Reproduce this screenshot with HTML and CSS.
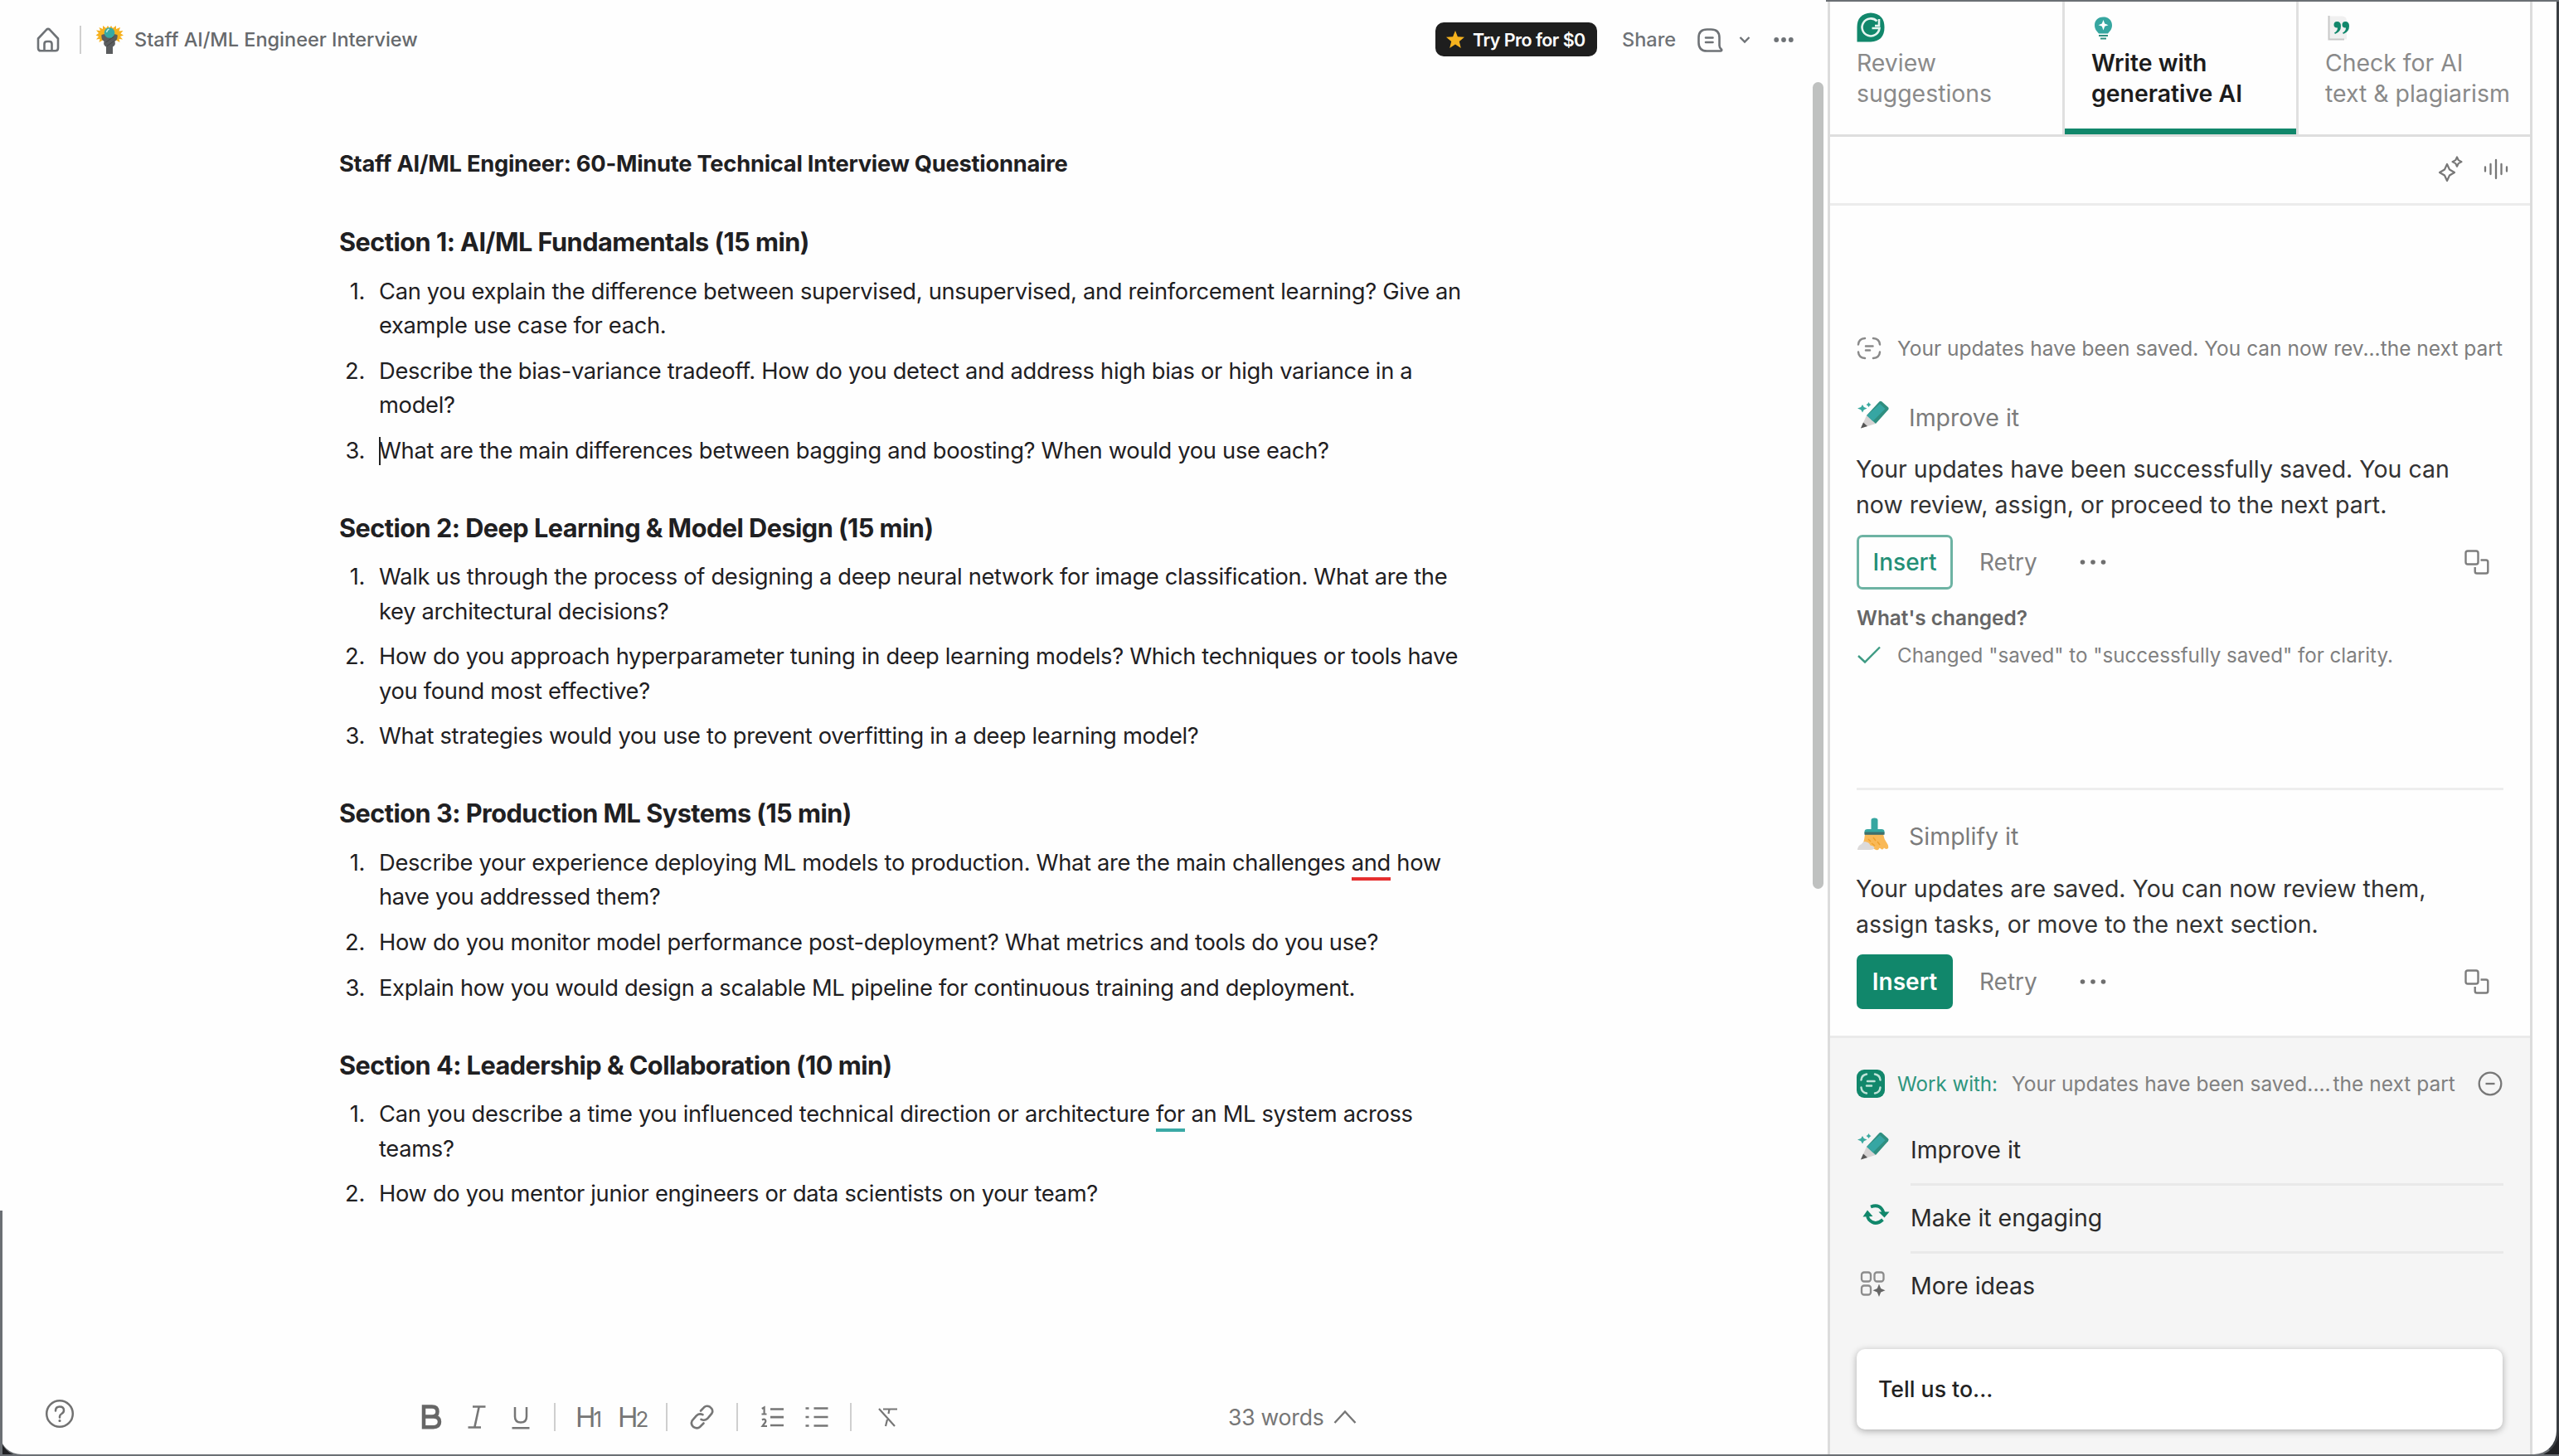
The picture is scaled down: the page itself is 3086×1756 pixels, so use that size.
FILE: index.html
```html
<!DOCTYPE html>
<html lang="en">
<head>
<meta charset="utf-8">
<title>Staff AI/ML Engineer Interview</title>
<link rel="stylesheet" href="styles.css">
</head>
<body>
<svg class="sprite" width="0" height="0" aria-hidden="true">
  <symbol id="pencil" viewBox="0 0 40 36">
    <path d="M7 5l1.800 2.900L12.500 9.500l-3.700 1.800L7 14.500l-1.800-3.200L1 9.500l4.200-1.600z" fill="#3aa99f"/>
    <path d="M14.500 2l1.200 1.900L17.500 5l-1.800 1.200L14.500 8l-1.200-1.800L11.500 5l1.800-1.100z" fill="#3aa99f"/>
    <path d="M12 18L23 28 5 33.500z" fill="#d6d3d3"/>
    <path d="M8 26.500l5 4.500-8 2.500z" fill="#555"/>
    <path d="M27.500 1.300q1.500-1 3 .2l7.300 6.500q1.600 1.500.2 3.200L23 28 12 18z" fill="#2f8f80"/>
    <path d="M28 4l6.500 6L19.500 25 12.500 18z" fill="#36a6a3"/>
  </symbol>
  <symbol id="copy" viewBox="0 0 30 30">
    <g fill="none" stroke="#7d7d7d" stroke-width="2.400" stroke-linejoin="round">
      <rect x="1.500" y="1.500" width="15" height="16" rx="2.500"/>
      <path d="M19.500 12.500H26q2.300 0 2.300 2.300v11.400q0 2.300-2.300 2.300H15q-2.300 0-2.300-2.300V21"/>
    </g>
  </symbol>
  <symbol id="dots" viewBox="0 0 32 8">
    <g fill="#6f6f6f"><circle cx="3.500" cy="4" r="2.800"/><circle cx="16" cy="4" r="2.800"/><circle cx="28.500" cy="4" r="2.800"/></g>
  </symbol>
</svg>

<div class="window">
  <main class="editor">
    <header class="topbar">
      <svg class="home" width="28" height="30" viewBox="0 0 28 30" fill="none" stroke="#6e7276" stroke-width="2.600" stroke-linejoin="round"><path d="M2 13.500L12 2.800q2-1.800 4 0l10 10.700V25q0 3.300-3.300 3.300H5.300Q2 28.300 2 25z"/><path d="M9.500 28v-8q0-3 3-3h3q3 0 3 3v8"/></svg>
      <span class="rule"></span>
      <svg class="doc-icon" width="34" height="34" viewBox="0 0 34 34"><path d="M17 3l2-3 2 3 4-3v4l5-2-1.500 4.500 5-.500-3 3.500 3.500 2-4 1.500 3 3.500-4.500-.500 1 4-4.500-2.500H9L4.500 20l1-4-4.500.5L4 13 .5 11.500 4 9 1 5.500l5 .5L4.500 2 9 4V0l4 3 2-3z" fill="#f6b11f"/><path d="M7.500 11q-1 5 3 8-1.500 4 2.500 6.500V34h8v-8.500q4-2 2.500-6.500 4-3 3-8l-4-1-5.500 3.500L11 10z" fill="#5a5c5e"/><path d="M12.500 20l10-7M14 24.500l8.500-6" stroke="#444" fill="none"/><circle cx="17" cy="8.500" r="6.300" fill="#36a9a5"/><path d="M13.500 8q.5-3 3-4" fill="none" stroke="#c9efec" stroke-width="1.500"/></svg>
      <span class="doc-name">Staff AI/ML Engineer Interview</span>
      <span class="pro"><svg width="22" height="21" viewBox="0 0 22 21"><path d="M11 0l2.900 7.200 8.100.6-6.200 5.100 2 8.100-6.800-4.400L4.200 21l2-8.100L0 7.800l8.100-.6z" fill="#f5b21e"/></svg><span>Try Pro for $0</span></span>
      <span class="share">Share</span>
      <svg class="comment" width="31" height="29" viewBox="0 0 31 29" fill="none" stroke="#6e7276" stroke-width="2.600" stroke-linejoin="round" stroke-linecap="round"><path d="M11.500 1.500h5q10 0 10 10V21q0 2.500 2.600 4.800.6 1.700-1.300 1.700H11.500q-10 0-10-10v-6q0-10 10-10z"/><path d="M10 11.500h8.500M10 17h8.500"/></svg>
      <svg class="chev" width="14" height="10" viewBox="0 0 14 10" fill="none" stroke="#6e7276" stroke-width="2.400"><path d="M1.500 2L7 7.500 12.500 2"/></svg>
      <svg class="more" width="24" height="8" viewBox="0 0 24 8" fill="#6e7276"><circle cx="3.200" cy="4" r="2.900"/><circle cx="12" cy="4" r="2.900"/><circle cx="20.800" cy="4" r="2.900"/></svg>
    </header>

    <article class="doc">
      <h1>Staff AI/ML Engineer: 60-Minute Technical Interview Questionnaire</h1>
      <h2>Section 1: AI/ML Fundamentals (15 min)</h2>
      <ol>
        <li><b>1.</b><p>Can you explain the difference between supervised, unsupervised, and reinforcement learning? Give an<br>example use case for each.</p></li>
        <li><b>2.</b><p>Describe the bias-variance tradeoff. How do you detect and address high bias or high variance in a<br>model?</p></li>
        <li><b>3.</b><p><i class="caret"></i>What are the main differences between bagging and boosting? When would you use each?</p></li>
      </ol>
      <h2>Section 2: Deep Learning &amp; Model Design (15 min)</h2>
      <ol>
        <li><b>1.</b><p>Walk us through the process of designing a deep neural network for image classification. What are the<br>key architectural decisions?</p></li>
        <li><b>2.</b><p>How do you approach hyperparameter tuning in deep learning models? Which techniques or tools have<br>you found most effective?</p></li>
        <li><b>3.</b><p>What strategies would you use to prevent overfitting in a deep learning model?</p></li>
      </ol>
      <h2>Section 3: Production ML Systems (15 min)</h2>
      <ol>
        <li><b>1.</b><p>Describe your experience deploying ML models to production. What are the main challenges <span class="mark red">and</span> how<br>have you addressed them?</p></li>
        <li><b>2.</b><p>How do you monitor model performance post-deployment? What metrics and tools do you use?</p></li>
        <li><b>3.</b><p>Explain how you would design a scalable ML pipeline for continuous training and deployment.</p></li>
      </ol>
      <h2>Section 4: Leadership &amp; Collaboration (10 min)</h2>
      <ol>
        <li><b>1.</b><p>Can you describe a time you influenced technical direction or architecture <span class="mark teal">for</span> an ML system across<br>teams?</p></li>
        <li><b>2.</b><p>How do you mentor junior engineers or data scientists on your team?</p></li>
      </ol>
    </article>

    <footer class="format">
      <svg class="help" width="36" height="36" viewBox="0 0 36 36" fill="none" stroke="#727272" stroke-width="2.500"><circle cx="18" cy="18" r="15.800"/><path d="M13 14.500q0-5 5-5t5 4.500q0 2.500-2.600 4-2.400 1.300-2.400 3.500v1" stroke-linecap="round"/><circle cx="18" cy="26.500" r="1" fill="#727272" stroke-width="1.200"/></svg>
      <svg width="25" height="30" viewBox="0 0 25 30" fill="none" stroke="#666" stroke-width="4.500"><path d="M3 2.500h10q6.500 0 6.500 6t-6.500 6H3zM3 14.500h11.500q7.500 0 7.500 6.300t-7.500 6.500H3z"/></svg>
      <svg class="i" width="22" height="30" viewBox="0 0 22 30" fill="none" stroke="#767676" stroke-width="2.600"><path d="M6 2.500h15.500M.5 27.500H16M13.700 2.500L8.300 27.500"/></svg>
      <svg class="u" width="22" height="28" viewBox="0 0 22 28" fill="none" stroke="#767676" stroke-width="2.500"><path d="M4 1v11.500q0 7 7 7t7-7V1M.5 26.300h21"/></svg>
      <span class="rule r1"></span>
      <span class="hx">H<small>1</small></span>
      <span class="hx h-two">H<small>2</small></span>
      <span class="rule r2"></span>
      <svg class="link" width="30" height="30" viewBox="0 0 30 30" fill="none" stroke="#767676" stroke-width="2.600" stroke-linecap="round"><path d="M13 7.500l4-4.200q3-2.800 7-.6 5 3.600 2.400 8L21 17q-3.500 3-7.500.8"/><path d="M16.500 22.500L12 27q-3 2.600-7.500.2Q.5 24 2.600 19.500L8 13.200q3.500-3 7.500-1"/></svg>
      <span class="rule r3"></span>
      <svg class="ol" width="28" height="26" viewBox="0 0 28 26" fill="none" stroke="#767676" stroke-width="2.700"><path d="M11 3.500h16M11 13.200h16M11 23h16"/><path d="M.8 3l2.800-1.600V9M.5 9.500h6M1 16.500q2.400-1.500 4 0 1 2-1 4L1.500 24H7" stroke-width="2.200"/></svg>
      <svg class="ul" width="28" height="26" viewBox="0 0 28 26" fill="none" stroke="#767676" stroke-width="2.700"><path d="M10.500 2.500h17M10.500 13h17M10.500 23.500h17M.5 2.500h4M.5 13h4M.5 23.500h4"/></svg>
      <span class="rule r4"></span>
      <svg class="clear" width="24" height="24" viewBox="0 0 24 24" fill="none" stroke="#767676" stroke-width="2.200"><path d="M6 2.500h17M1 2L20 23M13.500 2.500L12.500 8M11 15l-2 8"/></svg>
      <span class="words">33 words</span>
      <svg class="up" width="28" height="18" viewBox="0 0 28 18" fill="none" stroke="#767676" stroke-width="2.400"><path d="M1.500 16L14 2.500 26.500 16"/></svg>
    </footer>
    <div class="scroll"></div>
  </main>

  <aside class="panel">
    <nav class="tabs">
      <div class="tab">
        <svg width="34" height="36" viewBox="0 0 34 36"><path d="M17 .5Q33.500 1.500 33.500 18T17 35.500H.5V18Q.5 1.500 17 .5z" fill="#11876b"/><path d="M24.500 10.500A10.500 10.500 0 1 0 27.500 19H18.500M27 8v8h-5" fill="none" stroke="#e6f5f0" stroke-width="2.600"/></svg>
        <span>Review<br>suggestions</span>
      </div>
      <div class="tab active">
        <svg width="30" height="36" viewBox="0 0 30 36"><path d="M14.500 5.500c7 0 10.500 4.500 10.500 10 0 5-3 7.500-5 10H9c-2-2.500-5-5-5-10 0-5.500 3.500-10 10.500-10z" fill="#36a6a0"/><path d="M14.500 9l1.700 4.600 4.300 1.600-4.300 1.600-1.700 4.600-1.700-4.600-4.300-1.600 4.300-1.600z" fill="#fff"/><path d="M9 28h11M11 31.500h7" stroke="#2f8f80" stroke-width="2.200"/></svg>
        <span>Write with<br>generative AI</span>
      </div>
      <div class="tab last">
        <svg width="34" height="36" viewBox="0 0 34 36"><path d="M4.500 4.500H20q6 0 6 6V32.500H4.500z" fill="#f0f0f0"/><path d="M4.500 4v28.500H23" fill="none" stroke="#c8c8c8" stroke-width="2"/><path d="M11 24.500q4-2 4-6-4.500.5-4.500-3.700 0-3.800 3.900-3.800 4.600 0 4.600 5.500 0 7-7 9.500zM21 24.500q4-2 4-6-4.500.5-4.500-3.700 0-3.800 3.900-3.800 4.600 0 4.600 5.500 0 7-7 9.500z" fill="#11876b"/></svg>
        <span>Check for AI<br>text &amp; plagiarism</span>
      </div>
    </nav>
    <div class="tools">
      <svg width="30" height="31" viewBox="0 0 30 31" fill="none" stroke="#777" stroke-width="2.200" stroke-linejoin="round"><path d="M11 10l3 6.500 6 3.500-6 3.500L11 30l-3-6.500L2 20l6-3.500zM23 1.500l1.700 3.600 3.800 2-3.800 2-1.700 3.600-1.700-3.600-3.800-2 3.800-2z"/></svg>
      <svg width="30" height="26" viewBox="0 0 30 26" fill="none" stroke="#777" stroke-width="2.300" stroke-linecap="round"><path d="M2 10.500v5M8.500 7v12M15 2v22M21.500 7v12M28 10.500v5"/></svg>
    </div>

    <section class="chat">
      <div class="quote">
        <svg width="30" height="28" viewBox="0 0 30 28" fill="none" stroke="#8a8a8a" stroke-width="2.500" stroke-linecap="round"><path d="M2 9.500Q2.500 2.500 10 2M20 2q7.500.5 8 7.500M28 18.500q-.5 7-8 7.500M10 26q-7.500-.5-8-7.500M11 11.500h8.500M11 16.500h5"/></svg>
        <span>Your updates have been saved. You can now rev...the next part</span>
      </div>
      <div class="action"><svg width="40" height="36"><use href="#pencil"/></svg><span>Improve it</span></div>
      <p class="reply first">Your updates have been successfully saved. You can<br>now review, assign, or proceed to the next part.</p>
      <div class="buttons"><span class="btn outline">Insert</span><span class="retry">Retry</span><svg class="dots" width="32" height="8"><use href="#dots"/></svg><svg class="copy" width="30" height="30"><use href="#copy"/></svg></div>
      <div class="changed">What's changed?</div>
      <div class="change">
        <svg width="30" height="24" viewBox="0 0 30 24" fill="none" stroke="#3d9a83" stroke-width="2.400"><path d="M2 13l8 7.500L28 2.500"/></svg>
        <span>Changed "saved" to "successfully saved" for clarity.</span>
      </div>
      <hr>
      <div class="action second"><svg width="40" height="40" viewBox="0 0 40 40"><path d="M10 20h22q1 6 4 10 3 4 2 7-2.500 2-5-.5-1.500 3.500-4 1-1.500-2-2.500 1-2 2-6-1-5 1.500-8-2-4 .5-5-3 2-6 2.500-12.500z" fill="#f9b957"/><path d="M14 26l3 3M20 24l3 4M18 31l4 3M25 29l3 4" stroke="#efa12c" stroke-width="1.500"/><path d="M1 39q.5-5.500 5-7 2-4 6-2.500 3 .5 4.500 4 4 .5 5 3-1 2.500-5 2.500z" fill="#dcdada"/><path d="M17.500 3q0-2.500 4-2.500t4 2.500v11H30q3.500 0 3.500 3v2.500h-24V17q0-3 3.500-3h4.500z" fill="#36a6a0"/><path d="M9.500 17.500h24v3.300h-24z" fill="#3f6f6b"/></svg><span>Simplify it</span></div>
      <p class="reply">Your updates are saved. You can now review them,<br>assign tasks, or move to the next section.</p>
      <div class="buttons"><span class="btn solid">Insert</span><span class="retry">Retry</span><svg class="dots" width="32" height="8"><use href="#dots"/></svg><svg class="copy" width="30" height="30"><use href="#copy"/></svg></div>
    </section>

    <section class="prompt">
      <div class="work">
        <svg width="34" height="34" viewBox="0 0 34 34"><rect width="34" height="34" rx="9" fill="#11876b"/><path d="M5.500 12.500Q6 6.500 12 5.500M22 5.500q6 1 6.500 7M28.500 21.500q-.5 6-6.500 7M12 28.500q-6-1-6.500-7M13 14h8.500M12 19.500h6" fill="none" stroke="#bfe3d8" stroke-width="2.500" stroke-linecap="round"/></svg>
        <span class="with">Work with:</span><span class="what">Your updates have been saved....<span class="tail">the next part</span></span>
        <svg class="minus" width="30" height="30" viewBox="0 0 30 30" fill="none" stroke="#777" stroke-width="2.300"><circle cx="15" cy="15" r="13.300"/><path d="M9.500 15h11"/></svg>
      </div>
      <div class="idea"><svg width="40" height="36"><use href="#pencil"/></svg><span>Improve it</span></div>
      <div class="idea"><svg width="40" height="36" viewBox="0 0 40 36" fill="none" stroke="#11876b" stroke-width="3.800"><path d="M17 8.500q11.500-4.500 15.500 7M31.500 24q-9 8-16.500 0-2-2.500-2-6"/><path d="M26.500 14.500h13l-6 7zM7.500 20.500l5.500-8 6.500 7.500z" fill="#11876b" stroke="none"/></svg><span>Make it engaging</span></div>
      <div class="idea"><svg width="40" height="36" viewBox="0 0 40 36" fill="none" stroke="#8c8c8c" stroke-width="2.300"><rect x="6" y="5.500" width="11" height="11" rx="3"/><rect x="21.500" y="5.500" width="11" height="11" rx="3"/><rect x="6" y="21.500" width="11" height="11" rx="3"/><path d="M27 19.500l2.200 5.500 5.300 2.200-5.300 2.200-2.200 5.600-2.200-5.600-5.300-2.200 5.300-2.200z" fill="#666" stroke="none"/></svg><span>More ideas</span></div>
      <div class="ask"><div class="input">Tell us to...</div></div>
    </section>
  </aside>
</div>
<div class="frame-top"></div>
<div class="frame-left"></div>
</body>
</html>
```
FILE: styles.css
```css
* { box-sizing: border-box; }
body {
  margin: 0;
  width: 3086px;
  height: 1756px;
  overflow: hidden;
  position: relative;
  background: linear-gradient(#fff 0 1460px, #202124 1460px);
  font-family: Inter, "Liberation Sans", sans-serif;
  color: #1f2022;
  white-space: nowrap;
}
svg { display: block; flex: none; overflow: visible; }
.sprite { position: absolute; }
.window {
  display: flex;
  width: 3086px;
  height: 1756px;
  background: #fefefe;
  border-right: 3px solid #3a3e42;
  border-bottom: 2px solid #6b6f73;
  border-radius: 0 0 30px 26px;
}
.frame-top { position: absolute; left: 2202px; right: 0; top: 0; height: 2px; background: #6b6f74; }
.frame-left {
  position: absolute; left: 0; right: 0; top: 1460px; bottom: 0;
  border-left: 3px solid #6b6f74;
  border-bottom: 2px solid #6b6f74;
}

/* Editor */
.editor { position: relative; width: 2204px; display: flex; flex-direction: column; }
.scroll { position: absolute; left: 2186px; top: 99px; width: 13px; height: 973px; border-radius: 7px; background: #bfc1c0; }
.topbar { height: 98px; padding: 0 41px 2px 44px; display: flex; align-items: center; font-size: 23.500px; font-weight: 500; color: #66696c; }
.rule { width: 2px; height: 34px; background: #cfcfcf; }
.topbar .rule { margin-left: 24px; }
.doc-icon { margin-left: 17px; }
.doc-name { margin: -1px 0 0 13px; letter-spacing: -0.020px; }
.pro {
  margin-left: auto; width: 195px; height: 41px; padding-left: 13px; margin-top: -1px;
  display: flex; align-items: center; gap: 10px;
  border-radius: 10px; background: #1e1e1e; color: #fff; font-size: 21.500px; font-weight: 600; letter-spacing: -0.550px;
}
.share { margin: -1px 0 0 30px; width: 66px; color: #6e7276; }
.comment { margin-left: 25px; }
.chev { margin-left: 19px; }
.more { margin-left: 28px; }

.doc { flex: 1; padding: 79px 0 0 409px; }
.doc h1 { margin: 0 0 53px; font-size: 27.300px; line-height: 41px; font-weight: 700; letter-spacing: -0.250px; }
.doc h2 { margin: 51.800px 0 18.800px; font-size: 30.700px; line-height: 41px; font-weight: 700; letter-spacing: -0.530px; }
.doc ol { margin: 0; padding: 0; list-style: none; display: flex; flex-direction: column; gap: 13.500px; }
.doc li { display: flex; font-size: 27.300px; line-height: 41.200px; letter-spacing: -0.310px; }
.doc li b { width: 31px; margin-right: 17px; text-align: right; font-weight: 400; }
.doc li p { margin: 0; position: relative; }
.caret { position: absolute; left: 0; top: 4px; width: 2px; height: 34px; background: #222; }
.mark { background: linear-gradient(currentColor, currentColor) bottom / 100% 4px no-repeat; padding-bottom: 5px; }
.mark.red { background-image: linear-gradient(#e62e2e, #e62e2e); }
.mark.teal { background-image: linear-gradient(#3aa9a5, #3aa9a5); }

.format { height: 90px; padding: 0 0 0 54px; display: flex; align-items: center; font-size: 27px; color: #767676; }
.help { margin: 0 418px 8px 0; }
.format .i { margin-left: 31px; }
.format .u { margin: 2px 0 0 31px; }
.r1 { margin-left: 29px; }
.hx { margin-left: 24px; width: 32px; font-size: 33px; letter-spacing: -3px; }
.hx small { font-size: 26px; }
.h-two { margin-left: 19px; }
.r2 { margin-left: 26px; }
.link { margin-left: 27px; }
.r3 { margin-left: 26px; }
.ol { margin-left: 28px; }
.ul { margin-left: 25px; }
.r4 { margin-left: 26px; }
.clear { margin-left: 32px; }
.words { margin-left: 398px; width: 116px; font-size: 26.600px; letter-spacing: -0.250px; }
.up { margin-left: 11px; }

/* Assistant panel */
.panel { width: 850px; border-left: 3px solid #dcdcdc; border-right: 3px solid #dcdcdc; display: flex; flex-direction: column; }
.tabs { display: grid; grid-template-columns: 283px 282px 1fr; height: 165px; border-bottom: 3px solid #dedede; }
.tab { padding: 15px 0 0 32px; border-right: 3px solid #e0e0e0; color: #8a8a8a; font-size: 28.400px; line-height: 37.300px; }
.tab span { display: block; margin-top: 6px; }
.tab.active { color: #1c1c1c; font-weight: 600; position: relative; }
.tab.active::after { content: ""; position: absolute; left: 0; right: 0; bottom: 0; height: 7px; background: #11876b; }
.tab.last { border-right: 0; }
.tools { height: 83px; padding: 0 26px 3px 0; border-bottom: 3px solid #ececec; display: flex; justify-content: flex-end; align-items: center; gap: 25px; }

.chat { flex: 1; padding: 152px 32px 0; display: flex; flex-direction: column; }
.quote { display: flex; align-items: center; gap: 19px; height: 40px; font-size: 24.500px; color: #7d7d7d; }
.action { display: flex; align-items: center; gap: 23px; height: 44px; margin-top: 41px; font-size: 28.500px; color: #7b7b7b; }
.action svg { margin-top: -5px; }
.reply { margin: 19px 0 0 -1px; font-size: 28.500px; line-height: 43px; color: #333; }
.buttons { display: flex; align-items: center; height: 66px; margin-top: 15px; font-size: 28px; color: #808080; }
.btn { width: 116px; height: 66px; border-radius: 7px; display: grid; place-items: center; }
.outline { border: 3px solid #6db3a3; color: #238f76; font-weight: 500; }
.solid { background: #11876b; color: #fff; font-weight: 600; }
.retry { margin-left: 32px; width: 74px; }
.dots { margin-left: 47px; }
.copy { margin-left: auto; margin-right: 17px; }
.changed { margin-top: 14px; font-size: 24.400px; line-height: 40px; font-weight: 600; color: #666; }
.change { display: flex; align-items: center; gap: 19px; height: 44px; margin-top: 3px; font-size: 24.150px; color: #808080; }
.chat hr { width: 780px; height: 3px; margin: 138px 0 0; border: 0; background: #eee; }
.action.second { margin-top: 33px; }
.second + .reply { margin-top: 20px; }

.prompt { height: 505px; background: #f5f5f5; border-top: 3px solid #eaeaea; padding: 35px 32px 0; }
.work { display: flex; align-items: center; height: 40px; font-size: 24.500px; color: #808080; }
.with { width: 138px; margin-left: 15px; font-size: 24.100px; color: #2e957d; }
.tail { margin-left: 3px; }
.minus { margin-left: auto; margin-right: 1px; }
.idea { display: flex; gap: 25px; height: 82px; font-size: 28.500px; line-height: 78px; color: #2b2b2b; }
.idea svg { margin-top: 17px; }
.idea span { flex: 1; border-bottom: 3px solid #e9e9e9; }
.work + .idea { margin-top: 21px; }
.idea:nth-child(4) span { border-bottom: 0; }
.ask { padding-top: 33px; }
.input { width: 779px; height: 97px; padding-left: 26px; border-radius: 10px; background: #fff; box-shadow: 0 2px 9px rgba(0,0,0,.3); font-size: 26.700px; font-weight: 500; line-height: 97px; color: #222; }
```
